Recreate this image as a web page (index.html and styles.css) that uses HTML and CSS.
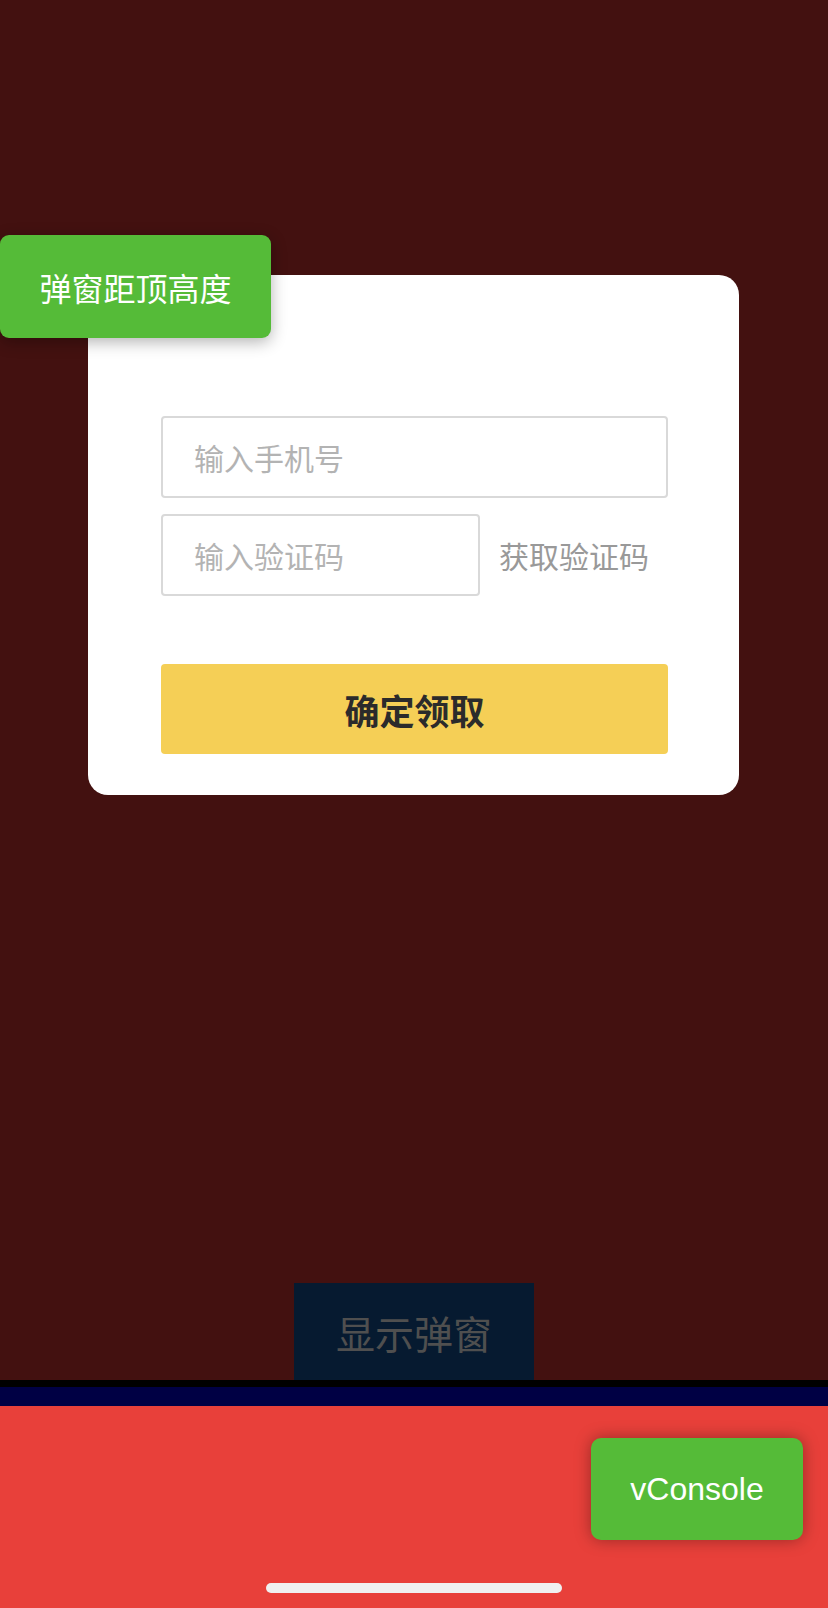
FILE: index.html
```html
<!DOCTYPE html>
<html lang="zh-CN">
<head>
<meta charset="utf-8">
<title>弹窗</title>
<link rel="stylesheet" href="styles.css">
</head>
<body>
<div class="page">
  <main class="main">
    <button class="show-btn" type="button">显示弹窗</button>
  </main>
  <div class="line-black"></div>
  <div class="line-navy"></div>
  <footer class="footer"></footer>

  <div class="modal">
    <input class="field field-phone" type="text" placeholder="输入手机号">
    <div class="code-row">
      <input class="field field-code" type="text" placeholder="输入验证码">
      <span class="get-code">获取验证码</span>
    </div>
    <button class="confirm" type="button">确定领取</button>
  </div>

  <div class="top-badge">弹窗距顶高度</div>
  <div class="vconsole">vConsole</div>
  <div class="home-indicator"></div>
</div>
</body>
</html>
```
FILE: styles.css
```css
* { box-sizing: border-box; }
html, body { margin: 0; padding: 0; }
body {
  width: 828px;
  height: 1608px;
  overflow: hidden;
  font-family: "Noto Sans CJK SC", "Noto Sans", sans-serif;
  background: #e8403a;
}
.page {
  position: relative;
  width: 828px;
  height: 1608px;
  display: flex;
  flex-direction: column;
}
.main {
  height: 1380px;
  background: #431110;
  display: flex;
  justify-content: center;
  align-items: flex-end;
}
.show-btn {
  width: 240px;
  height: 97px;
  border: 0;
  margin: 0;
  padding: 0;
  background: #061a30;
  color: #4f4f4f;
  font-family: "Noto Sans CJK SC", sans-serif;
  font-size: 39px;
  display: flex;
  align-items: center;
  justify-content: center;
}
.line-black { height: 7px; background: #000; }
.line-navy { height: 19px; background: #000044; }
.footer { flex: 1; background: #e8403a; }

.modal {
  position: absolute;
  left: 88px;
  top: 275px;
  width: 651px;
  height: 520px;
  background: #fff;
  border-radius: 20px;
  padding: 141px 71px 0 73px;
  display: flex;
  flex-direction: column;
}
.field {
  height: 82px;
  border: 2px solid #d9d9d9;
  border-radius: 4px;
  padding: 0 0 0 31px;
  font-family: "Noto Sans CJK SC", sans-serif;
  font-size: 30px;
  color: #333;
  outline: none;
  background: #fff;
  margin: 0;
}
.field::placeholder { color: #b3b3b3; }
.field-phone { width: 507px; }
.code-row {
  margin-top: 16px;
  display: flex;
  align-items: center;
  gap: 19px;
}
.field-code { width: 319px; }
.get-code {
  font-size: 30px;
  color: #999;
  white-space: nowrap;
}
.confirm {
  margin-top: 68px;
  width: 507px;
  height: 90px;
  border: 0;
  border-radius: 4px;
  background: #f5cf56;
  color: #2b2b2b;
  font-family: "Noto Sans CJK SC", sans-serif;
  font-weight: 700;
  font-size: 35px;
  padding: 0;
  display: flex;
  align-items: center;
  justify-content: center;
}

.top-badge {
  position: absolute;
  left: 0;
  top: 235px;
  width: 271px;
  height: 103px;
  background: #55bb38;
  border-radius: 9px;
  color: #fff;
  font-size: 32px;
  display: flex;
  align-items: center;
  justify-content: center;
  box-shadow: 0 4px 16px rgba(0, 0, 0, 0.3);
}
.vconsole {
  position: absolute;
  left: 591px;
  top: 1438px;
  width: 212px;
  height: 102px;
  background: #55bb38;
  border-radius: 10px;
  color: #fff;
  font-family: "Liberation Sans", Arial, sans-serif;
  font-size: 32px;
  display: flex;
  align-items: center;
  justify-content: center;
  box-shadow: 0 0 16px rgba(0, 0, 0, 0.35);
}
.home-indicator {
  position: absolute;
  left: 266px;
  top: 1583px;
  width: 296px;
  height: 10px;
  border-radius: 5px;
  background: #f0f0f0;
}
```
